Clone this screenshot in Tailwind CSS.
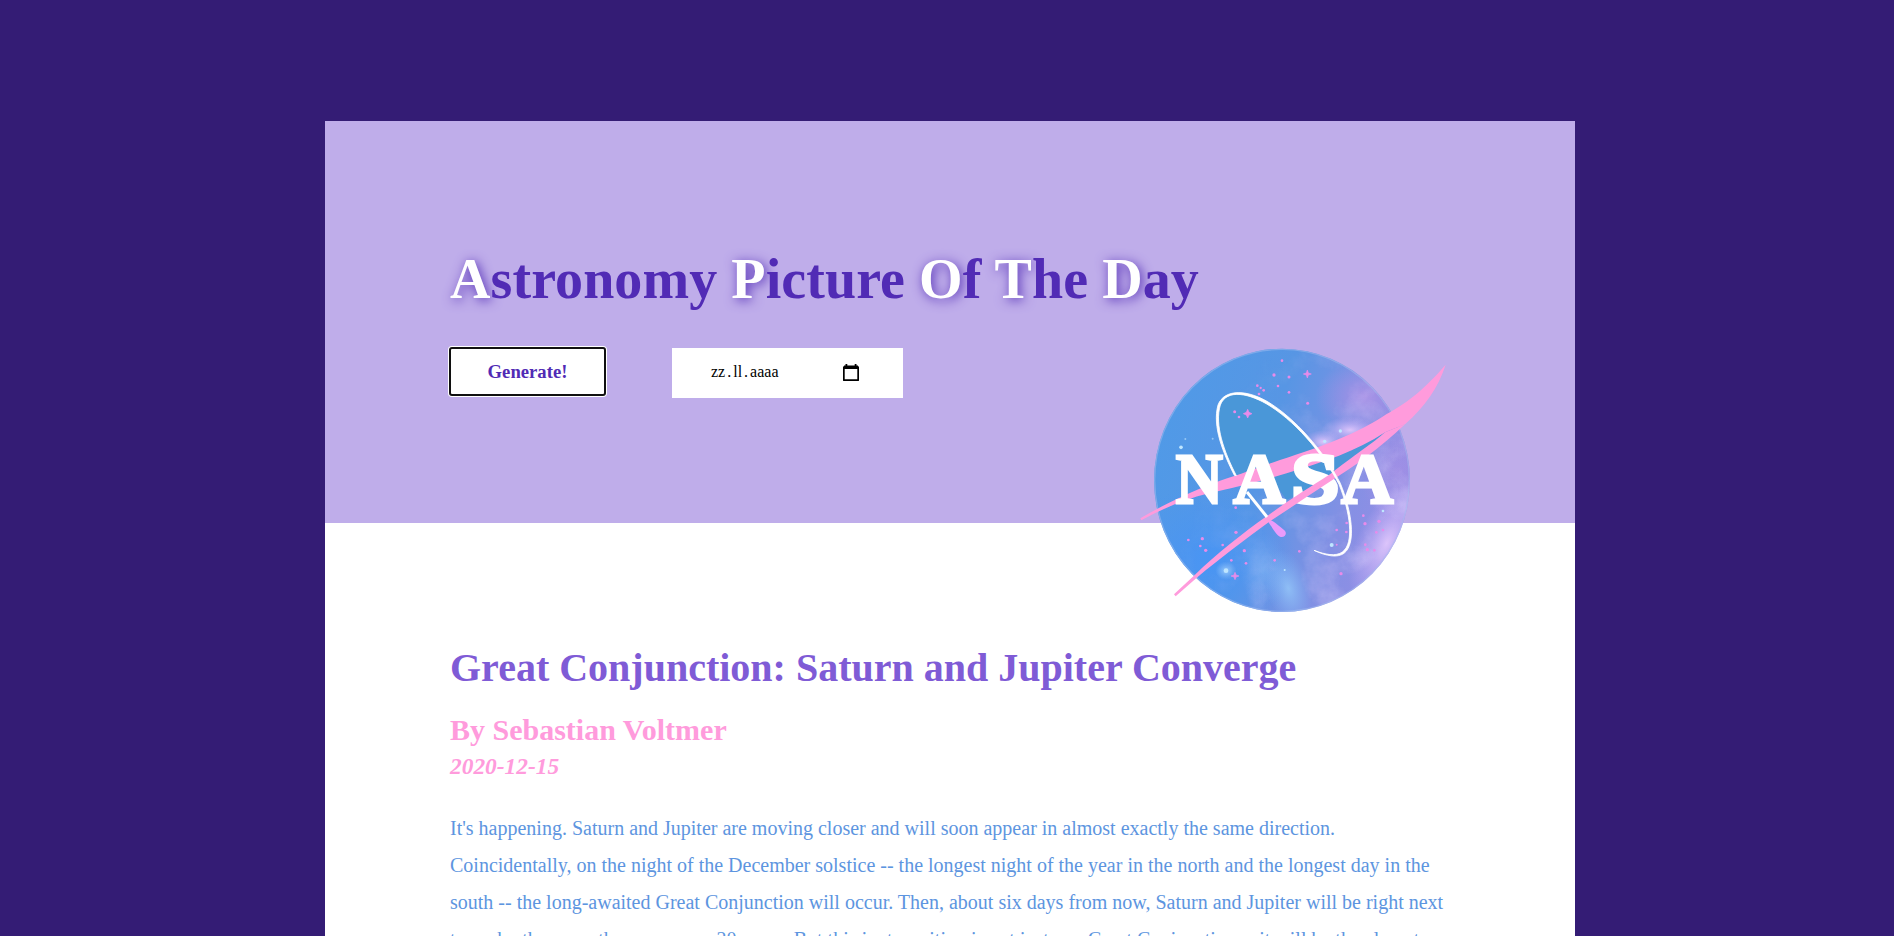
<!DOCTYPE html>
<html lang="en">
<head>
<meta charset="utf-8">
<title>Astronomy Picture Of The Day</title>
<script src="https://cdn.jsdelivr.net/npm/@tailwindcss/browser@4"></script>
</head>
<body class="h-screen overflow-hidden bg-[#341c75] pt-[121px] font-['Liberation_Serif','Times_New_Roman',serif]">
<main class="relative ml-[325px] h-[815px] w-[1250px] overflow-hidden bg-white">
  <header class="flex h-[402px] flex-col bg-[#bfadea] px-[125px] pt-[126px]">
    <h1 class="whitespace-nowrap text-[56px] leading-[64px] font-bold tracking-[0.08px] text-[#512bb5]"><span class="text-white [text-shadow:2px_2px_12px_#512bb5]">A</span>stronomy <span class="text-white [text-shadow:2px_2px_12px_#512bb5]">P</span>icture <span class="text-white [text-shadow:2px_2px_12px_#512bb5]">O</span>f <span class="text-white [text-shadow:2px_2px_12px_#512bb5]">T</span>he <span class="text-white [text-shadow:2px_2px_12px_#512bb5]">D</span>ay</h1>
    <div class="mt-[37px] flex items-start">
      <button class="-ml-px -mt-px h-[49px] w-[157px] rounded-[3px] border-2 border-[#101010] bg-white pt-[2px] text-[18.700px] font-bold text-[#512bb5] ring-1 ring-white">Generate!</button>
      <div class="ml-[66px] flex h-[50px] w-[231px] items-center bg-white pl-[39px] pb-[2px] text-[16px] text-black">
        <span>zz</span><span class="ml-[2px]">.</span><span class="ml-[2px]">ll</span><span class="ml-[2px]">.</span><span class="ml-[2px]">aaaa</span>
        <svg class="ml-auto mr-[44px] h-[17px] w-4" viewBox="0 0 16 17" fill="none"><path d="M.85 3h14.300v13.150H.85z" stroke="#000" stroke-width="1.700" stroke-linejoin="round"/><path d="M1 1.500h14v3.500H1zM2.500 0h1.800v2H2.500zM11.700 0h1.800v2h-1.800z" fill="#000"/></svg>
      </div>
    </div>
  </header>
  <section class="px-[125px] pt-[122px]">
    <h2 class="whitespace-nowrap text-[40px] leading-[46px] font-bold text-[#7f5bd6]">Great Conjunction: Saturn and Jupiter Converge</h2>
    <h3 class="mt-[22px] text-[30px] leading-[34px] font-bold text-[#ff9bdc]">By Sebastian Voltmer</h3>
    <h4 class="mt-[6px] text-[23.400px] leading-[26px] font-bold italic text-[#ff9bdc]">2020-12-15</h4>
    <p class="mt-[31px] whitespace-nowrap text-[20px] leading-[37px] text-[#5d95e0]">It's happening. Saturn and Jupiter are moving closer and will soon appear in almost exactly the same direction.<br>Coincidentally, on the night of the December solstice -- the longest night of the year in the north and the longest day in the<br>south -- the long-awaited Great Conjunction will occur. Then, about six days from now, Saturn and Jupiter will be right next<br>to each other -- as they are every 20 years. But this juxtaposition is not just any Great Conjunction -- it will be the closest</p>
  </section>
  <svg class="absolute left-[795px] top-[209px] h-[300px] w-[340px]" viewBox="0 0 1020 900" role="img" aria-label="NASA">
    <defs>
      <linearGradient id="sky" x1="0" y1=".35" x2="1" y2=".6"><stop offset="0" stop-color="#4e9be8"/><stop offset=".42" stop-color="#5796e4"/><stop offset=".68" stop-color="#8490e4"/><stop offset="1" stop-color="#a38ce6"/></linearGradient>
      <radialGradient id="pu"><stop offset="0" stop-color="#b090e6"/><stop offset="1" stop-color="#b090e6" stop-opacity="0"/></radialGradient>
      <radialGradient id="li"><stop offset="0" stop-color="#dcc4fb"/><stop offset="1" stop-color="#c5adf8" stop-opacity="0"/></radialGradient>
      <radialGradient id="bl"><stop offset="0" stop-color="#4995f4"/><stop offset="1" stop-color="#4995f4" stop-opacity="0"/></radialGradient>
      <radialGradient id="cy"><stop offset="0" stop-color="#96c9fa"/><stop offset="1" stop-color="#86b9f8" stop-opacity="0"/></radialGradient>
      <clipPath id="disc"><ellipse cx="486" cy="451" rx="384" ry="395"/></clipPath>
      <filter id="cloud" x="0" y="0" width="100%" height="100%"><feTurbulence type="fractalNoise" baseFrequency=".009" numOctaves="5" seed="8"/><feColorMatrix values="0 0 0 0 .72  0 0 0 0 .64  0 0 0 0 .98  2.2 0 0 0 -1"/></filter>
      <linearGradient id="fadeg" x1="0" y1="0" x2="1" y2=".35"><stop offset=".35" stop-color="#000"/><stop offset=".9" stop-color="#fff"/></linearGradient>
      <mask id="fade"><rect width="1020" height="900" fill="url(#fadeg)"/></mask>
    </defs>
    <g clip-path="url(#disc)">
      <rect width="1020" height="900" fill="url(#sky)"/>
      <ellipse cx="270" cy="690" rx="260" ry="230" fill="url(#bl)"/>
      <ellipse cx="735" cy="200" rx="150" ry="110" fill="url(#pu)" opacity=".8"/>
      <ellipse cx="830" cy="420" rx="110" ry="170" fill="url(#pu)" opacity=".5"/>
      <ellipse cx="690" cy="300" rx="85" ry="40" fill="url(#li)"/>
      <ellipse cx="610" cy="335" rx="60" ry="35" fill="url(#li)"/>
      <ellipse cx="430" cy="720" rx="70" ry="110" fill="url(#cy)" opacity=".4"/>
      <ellipse cx="505" cy="775" rx="65" ry="120" fill="url(#cy)" opacity=".8" transform="rotate(-15 505 775)"/>
      <ellipse cx="800" cy="640" rx="90" ry="190" fill="url(#li)" transform="rotate(25 800 640)"/>
      <ellipse cx="318" cy="722" rx="32" ry="28" fill="url(#cy)"/>
      <g mask="url(#fade)"><rect width="1020" height="900" filter="url(#cloud)" opacity=".5"/></g>
      <ellipse cx="486" cy="451" rx="382" ry="393" fill="none" stroke="#a3bdf0" stroke-width="4" opacity=".5"/>
    </g>
    <path d="M349 437C315 365 283 285 303 225C322 175 390 190 450 228C510 265 560 315 595 360L455 408Z" fill="#4a97d8"/>
    <path d="M795 307C690 370 590 400 450 440L500 510L560 480C650 430 735 370 795 307Z" fill="#4a97d8"/>
    <g fill="#e88bea">
      <circle cx="486" cy="92" r="4"/><circle cx="462" cy="135" r="5"/><circle cx="507" cy="141" r="4.500"/><circle cx="474" cy="168" r="4"/><circle cx="507" cy="187" r="4"/><circle cx="412" cy="167" r="4"/><circle cx="422" cy="174" r="3.500"/><circle cx="431" cy="181" r="4"/><circle cx="417" cy="192" r="4"/><circle cx="563" cy="220" r="4.500"/><circle cx="344" cy="245" r="4.500"/><circle cx="357" cy="261" r="4"/>
      <circle cx="347" cy="533" r="4"/><circle cx="348" cy="607" r="5"/><circle cx="205" cy="630" r="4"/><circle cx="247" cy="626" r="5"/><circle cx="241" cy="648" r="4"/><circle cx="257" cy="661" r="5"/><circle cx="308" cy="645" r="4"/><circle cx="373" cy="662" r="5"/><circle cx="334" cy="691" r="4"/><circle cx="378" cy="700" r="4"/><circle cx="464" cy="691" r="4"/><circle cx="538" cy="664" r="4"/><circle cx="650" cy="600" r="4"/><circle cx="680" cy="579" r="4"/><circle cx="679" cy="606" r="4"/><circle cx="730" cy="557" r="4"/><circle cx="735" cy="581" r="5"/><circle cx="777" cy="574" r="5"/><circle cx="769" cy="607" r="4"/><circle cx="789" cy="600" r="4"/><circle cx="736" cy="644" r="4"/><circle cx="742" cy="659" r="5"/><circle cx="763" cy="661" r="4"/><circle cx="663" cy="731" r="5"/><circle cx="650" cy="644" r="3"/>
      <path d="M562 120l3 9 9 3-9 3-3 9-3-9-9-3 9-3zM383 238l4 9 9 4-9 4-4 9-4-9-9-4 9-4zM345 727l3 8 9 3-9 3-3 8-3-8-9-3 9-3z" stroke="#e88bea" stroke-width="2"/>
    </g>
    <g fill="#bfe6ff"><circle cx="183" cy="352" r="5.500"/><circle cx="196" cy="327" r="3" opacity=".6"/><circle cx="278" cy="326" r="3" opacity=".6"/><circle cx="318" cy="722" r="7"/><circle cx="635" cy="645" r="6"/><circle cx="661" cy="303" r="5"/><circle cx="614" cy="334" r="5"/><circle cx="494" cy="720" r="3"/><circle cx="789" cy="543" r="4"/></g>
    <path d="M61 565C130 525 190 494 300 452C370 430 430 407 480 390C610 348 710 312 800 252C870 213 915 175 977 104C955 172 915 230 855 283L795 307C710 363 610 397 500 430C420 455 350 470 300 482C210 500 140 530 64 571Z" fill="#ff9bdc"/>
    <path d="M441 569C455 568 468 580 493 601C504 612 493 624 480 620C468 615 458 595 441 569Z" fill="#ea9bfa"/>
    <g fill="#fff" stroke="#fff" stroke-width="9" stroke-linejoin="miter" stroke-miterlimit="3" font-family="'Liberation Serif',serif" font-weight="bold" font-size="218">
      <text x="167" y="518" textLength="141" lengthAdjust="spacingAndGlyphs">N</text>
      <text x="340" y="518" textLength="156" lengthAdjust="spacingAndGlyphs">A</text>
      <text x="514" y="520" textLength="144" lengthAdjust="spacingAndGlyphs" stroke-width="12">S</text>
    </g>
    <path d="M795 307C765 335 700 378 630 433C560 478 500 515 440 559C370 608 290 672 225 734L162 793L167 799L232 742C300 685 380 625 450 574C510 535 560 500 620 461C700 412 780 355 855 283Z" fill="#ff9bdc"/>
    <text x="664" y="518" textLength="156" lengthAdjust="spacingAndGlyphs" fill="#fff" stroke="#fff" stroke-width="9" stroke-miterlimit="3" font-family="'Liberation Serif',serif" font-weight="bold" font-size="218">A</text>
    <path d="M349 437C312 365 283 285 301 225C320 175 390 190 450 228C540 285 620 390 657 463C690 545 704 640 667 666C648 680 615 674 582 661C620 679 652 684 672 670C711 640 694 540 661 460C622 382 545 282 454 222C385 177 313 175 294 225C276 290 310 370 343 436Z" fill="#fff" stroke="#fff" stroke-width="2.500"/>
    <path d="M381 486L441 561" stroke="#fff" stroke-width="9"/>
  </svg>
</main>
</body>
</html>
